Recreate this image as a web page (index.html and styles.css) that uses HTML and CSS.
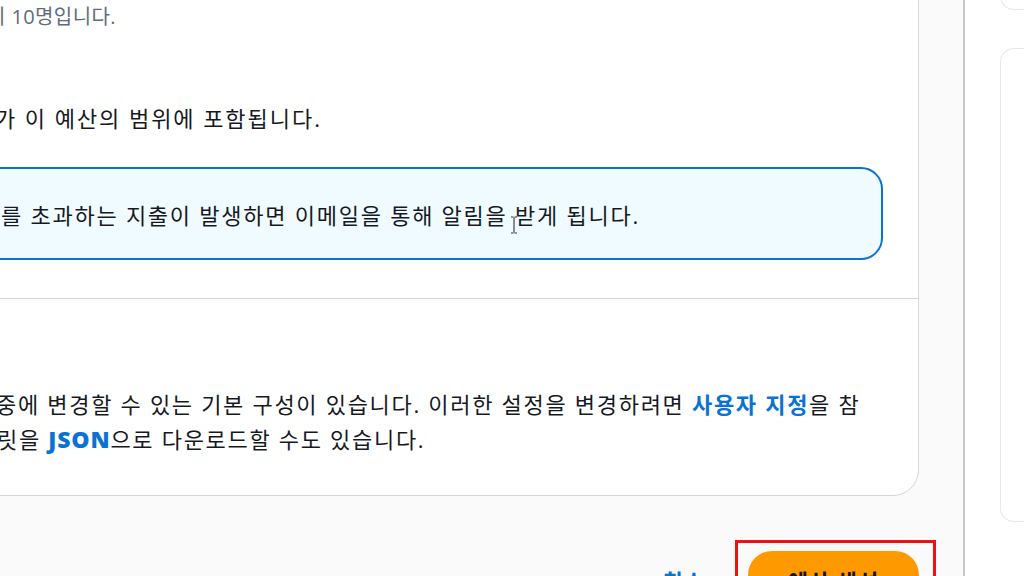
FILE: index.html
```html
<!DOCTYPE html>
<html lang="ko">
<head>
<meta charset="utf-8">
<title>예산 생성</title>
<link rel="stylesheet" href="styles.css">
</head>
<body>
<div class="app">
  <main class="main">
    <section class="card">
      <div class="sec sec1">
        <p class="hint">이 10명입니다.</p>
        <p class="scope">가 이 예산의 범위에 포함됩니다.</p>
        <div class="alert">
          <p class="alert-text">를 초과하는 지출이 발생하면 이메일을 통해 알림을 받게 됩니다.</p>
        </div>
      </div>
      <div class="sec sec2">
        <p class="body l3">중에 변경할 수 있는 기본 구성이 있습니다. 이러한 설정을 변경하려면 <a class="link">사용자 지정</a>을 참</p>
        <p class="body l4">릿을 <a class="link json">JSON</a>으로 다운로드할 수도 있습니다.</p>
      </div>
    </section>
    <div class="actions">
      <a class="cancel">취소</a>
      <div class="highlight">
        <button class="primary">예산 생성</button>
      </div>
    </div>
    <svg class="cursor" width="10" height="18" viewBox="0 0 10 18"><path d="M2 1h2.5M5.5 1H8M5 1.5v15M2 17h2.5M5.5 17H8" stroke="#333" stroke-width="1.1" fill="none"/></svg>
  </main>
  <aside class="side">
    <div class="side-card top"></div>
    <div class="side-card big"></div>
  </aside>
</div>
</body>
</html>
```
FILE: styles.css
```css
* { box-sizing: border-box; }
html, body { margin: 0; padding: 0; }
body {
  width: 1024px;
  height: 576px;
  overflow: hidden;
  font-family: "Open Sans", "Noto Sans CJK KR", sans-serif;
  color: #16191f;
  background: #ffffff;
}
.app { display: flex; height: 576px; }
.main {
  position: relative;
  width: 963px;
  flex: none;
  background: #fafafa;
  overflow: hidden;
}
.card {
  margin-top: -60px;
  margin-left: -60px;
  width: 979px;
  background: #ffffff;
  border: 1px solid #d6d6da;
  border-radius: 0 0 26px 0;
}
.sec1 { padding: 62px 35px 38px 60px; }
.sec2 { border-top: 1px solid #d6d6da; padding: 88px 35px 38px 60px; }
p { margin: 0; }
.hint {
  font-size: 20px;
  line-height: 28px;
  letter-spacing: 0.4px;
  color: #5f6b7a;
  margin-left: -14px;
  white-space: nowrap;
}
.scope {
  margin-top: 72px;
  font-size: 22px;
  line-height: 30px;
  letter-spacing: 1.95px;
  margin-left: -6px;
  white-space: nowrap;
}
.alert {
  margin-top: 34px;
  margin-left: -40px;
  height: 93px;
  border: 2px solid #0972d3;
  border-radius: 22px;
  background: #f0fbff;
  display: flex;
  align-items: center;
  padding-left: 38px;
}
.alert-text { font-size: 22px; line-height: 30px; letter-spacing: 1.75px; margin-top: 2px; white-space: nowrap; }
.body { font-size: 22px; line-height: 35px; letter-spacing: 1.7px; white-space: nowrap; }
.l3 { margin-left: -5px; }
.l4 { margin-left: -4px; }
.link { color: #0972d3; font-weight: 700; }
.json { font-size: 23px; letter-spacing: 0.8px; font-weight: 800; }
.actions {
  display: flex;
  justify-content: flex-end;
  align-items: flex-start;
  gap: 30px;
  padding-right: 27px;
  margin-top: 44px;
}
.cancel {
  color: #0972d3;
  font-weight: 700;
  font-size: 22px;
  letter-spacing: 1px;
  line-height: 30px;
  margin-top: 26px;
}
.highlight {
  border: 3px solid #ee1111;
  padding: 8px 14px 0 10px;
  width: 201px;
  height: 60px;
}
.primary {
  display: block;
  width: 171px;
  height: 52px;
  border: none;
  border-radius: 24px;
  background: #ff9900;
  color: #0f141a;
  font-family: inherit;
  font-weight: 700;
  font-size: 22px;
  letter-spacing: 1px;
  padding: 6px 0 0;
}
.cursor { position: absolute; left: 509px; top: 216px; }
.side {
  flex: 1;
  border-left: 2px solid #c6c6cd;
  background: #ffffff;
  padding-left: 35px;
  display: flex;
  flex-direction: column;
  gap: 38px;
}
.side-card {
  background: #ffffff;
  border: 1px solid #e6e8eb;
  border-right: none;
  border-radius: 14px 0 0 14px;
}
.side-card.top { height: 40px; margin-top: -30px; }
.side-card.big { height: 474px; }
```
